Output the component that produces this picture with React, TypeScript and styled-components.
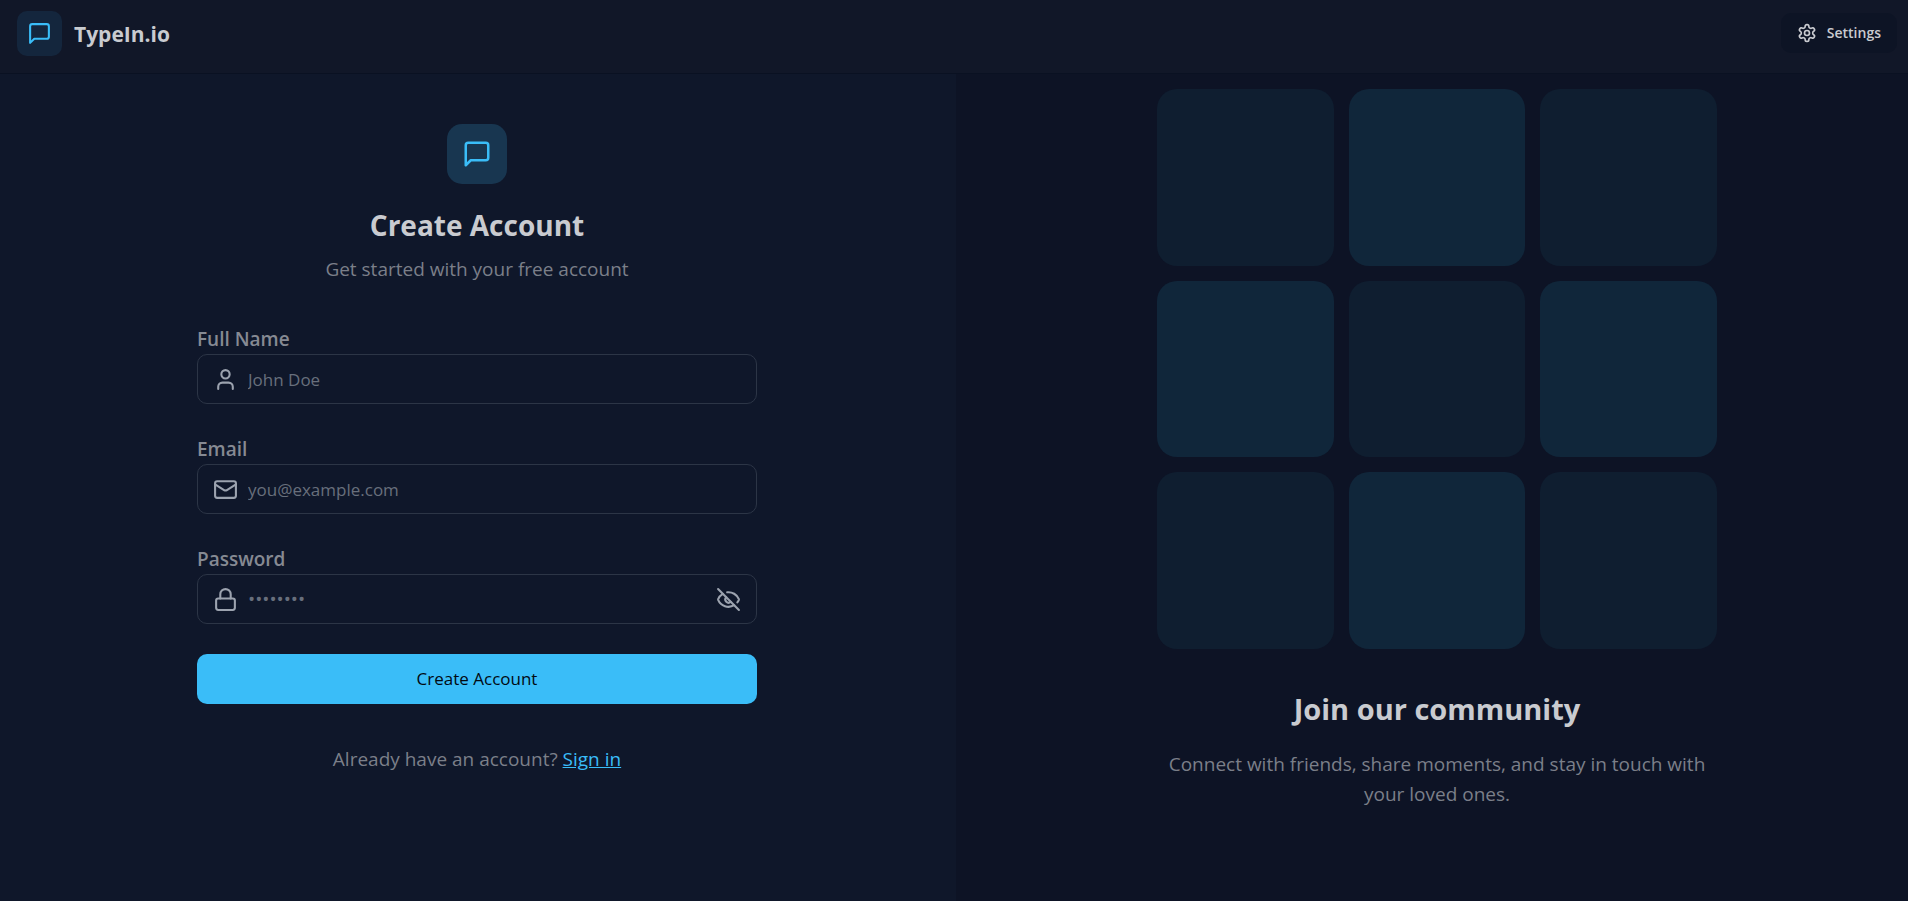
import React from "react";
import styled, { createGlobalStyle } from "styled-components";
import { User, Mail, Lock, EyeOff } from "lucide-react";

const GlobalStyle = createGlobalStyle`
  *, *::before, *::after { box-sizing: border-box; }
  body {
    margin: 0;
    background: #0f172a;
    color: #c9cbd0;
    font-family: "Segoe UI", "Open Sans", "Noto Sans", sans-serif;
    font-size: 19px;
    line-height: 30px;
  }
  h1, h2, p { margin: 0; }
`;

const Page = styled.div`
  min-height: 100vh;
  display: flex;
  flex-direction: column;
`;

const Header = styled.header`
  display: flex;
  align-items: flex-start;
  justify-content: space-between;
  height: 74px;
  padding: 11px 11px 0 17px;
  background: #111728;
  border-bottom: 1px solid #0a1122;
`;

const Brand = styled.a`
  display: flex;
  align-items: center;
  gap: 12px;
  color: inherit;
  text-decoration: none;
`;

const BrandName = styled.span`
  font-size: 21px;
  font-weight: 700;
`;

const IconTile = styled.span<{ $large?: boolean }>`
  display: flex;
  align-items: center;
  justify-content: center;
  width: ${(p) => (p.$large ? 60 : 45)}px;
  height: ${(p) => (p.$large ? 60 : 45)}px;
  border-radius: ${(p) => (p.$large ? 15 : 10)}px;
  background: ${(p) => (p.$large ? "#183650" : "#14263d")};
  color: #3abdf8;
`;

const LineIcon = styled.svg.attrs({ viewBox: "0 0 24 24", "aria-hidden": true })`
  fill: none;
  stroke: currentColor;
  stroke-width: 2;
  stroke-linecap: round;
  stroke-linejoin: round;
`;

const SettingsButton = styled.button`
  display: flex;
  align-items: center;
  gap: 10px;
  height: 40px;
  margin-top: 2px;
  padding: 0 16px;
  border: 0;
  border-radius: 10px;
  background: #0d1425;
  color: #c9cbd0;
  font: inherit;
  font-size: 14px;
  font-weight: 600;
`;

const Main = styled.main`
  flex: 1;
  display: grid;
  grid-template-columns: 1fr 1fr;
  column-gap: 4px;
`;

const FormSide = styled.section`
  display: flex;
  flex-direction: column;
  align-items: center;
  padding: 50px 0 0 2px;
`;

const Column = styled.div`
  width: 100%;
  max-width: 560px;
`;

const Intro = styled.div`
  display: flex;
  flex-direction: column;
  align-items: center;
  margin-bottom: 40px;
`;

const Title = styled.h1`
  margin: 21px 0 9px;
  font-size: 28px;
  line-height: 40px;
  font-weight: 700;
`;

const Muted = styled.p`
  color: #7b7f89;
  text-align: center;
`;

const Form = styled.form`
  display: flex;
  flex-direction: column;
  gap: 30px;
  margin-bottom: 40px;
`;

const Label = styled.label`
  display: block;
  color: #868a93;
  font-weight: 600;
`;

const InputBox = styled.div`
  display: flex;
  align-items: center;
  height: 50px;
  padding: 0 15px;
  border: 1px solid #2c3546;
  border-radius: 10px;
  color: #9ca3af;
`;

const Input = styled.input`
  flex: 1;
  min-width: 0;
  height: 100%;
  margin: 0 10px;
  padding: 0;
  border: 0;
  outline: 0;
  background: transparent;
  color: #c9cbd0;
  font: inherit;
  font-size: ${(p) => (p.type === "password" ? 19 : 17)}px;
  &::placeholder { color: #686f7c; opacity: 1; }
`;

const IconButton = styled.button`
  display: flex;
  padding: 0;
  border: 0;
  background: none;
  color: inherit;
`;

const Submit = styled.button`
  height: 50px;
  border: 0;
  border-radius: 10px;
  background: #3abdf8;
  color: #020a12;
  font: inherit;
  font-size: 17px;
  font-weight: 500;
`;

const TextLink = styled.a`
  color: #3abdf8;
  text-decoration: underline;
`;

const CommunitySide = styled.section`
  display: flex;
  flex-direction: column;
  align-items: center;
  padding: 15px 0 0 10px;
  background: #0d1325;
`;

const Pattern = styled.div`
  display: grid;
  grid-template-columns: repeat(3, 1fr);
  gap: 15px;
  margin-bottom: 40px;
`;

const Tile = styled.div<{ $bright: boolean }>`
  aspect-ratio: 1;
  border-radius: 20px;
  background: ${(p) => (p.$bright ? "#10263a" : "#0f1e30")};
`;

const Subtitle = styled.h2`
  margin-bottom: 20px;
  font-size: 29px;
  line-height: 40px;
  font-weight: 700;
  text-align: center;
`;

const ChatIcon = ({ size }: { size: number }) => (
  <LineIcon width={size} height={size}>
    <path d="M21 15a2 2 0 0 1-2 2H7l-4 4V5a2 2 0 0 1 2-2h14a2 2 0 0 1 2 2z" />
  </LineIcon>
);

const GearIcon = ({ size }: { size: number }) => (
  <LineIcon width={size} height={size}>
    <path d="M12.22 2h-.44a2 2 0 0 0-2 2v.18a2 2 0 0 1-1 1.73l-.43.25a2 2 0 0 1-2 0l-.15-.08a2 2 0 0 0-2.73.73l-.22.38a2 2 0 0 0 .73 2.73l.15.1a2 2 0 0 1 1 1.72v.51a2 2 0 0 1-1 1.74l-.15.09a2 2 0 0 0-.73 2.73l.22.38a2 2 0 0 0 2.73.73l.15-.08a2 2 0 0 1 2 0l.43.25a2 2 0 0 1 1 1.73V20a2 2 0 0 0 2 2h.44a2 2 0 0 0 2-2v-.18a2 2 0 0 1 1-1.73l.43-.25a2 2 0 0 1 2 0l.15.08a2 2 0 0 0 2.73-.73l.22-.39a2 2 0 0 0-.73-2.73l-.15-.08a2 2 0 0 1-1-1.74v-.5a2 2 0 0 1 1-1.74l.15-.09a2 2 0 0 0 .73-2.73l-.22-.38a2 2 0 0 0-2.73-.73l-.15.08a2 2 0 0 1-2 0l-.43-.25a2 2 0 0 1-1-1.73V4a2 2 0 0 0-2-2z" />
    <circle cx="12" cy="12" r="3" />
  </LineIcon>
);

const fields = [
  { id: "name", label: "Full Name", type: "text", placeholder: "John Doe", Icon: User },
  { id: "email", label: "Email", type: "email", placeholder: "you@example.com", Icon: Mail },
  { id: "password", label: "Password", type: "password", placeholder: "••••••••", Icon: Lock },
];

export default function App() {
  return (
    <Page>
      <GlobalStyle />
      <Header>
        <Brand href="#">
          <IconTile><ChatIcon size={25} /></IconTile>
          <BrandName>TypeIn.io</BrandName>
        </Brand>
        <SettingsButton type="button">
          <GearIcon size={20} />
          Settings
        </SettingsButton>
      </Header>
      <Main>
        <FormSide>
          <Column>
            <Intro>
              <IconTile $large><ChatIcon size={30} /></IconTile>
              <Title>Create Account</Title>
              <Muted>Get started with your free account</Muted>
            </Intro>
            <Form>
              {fields.map(({ id, label, type, placeholder, Icon }) => (
                <div key={id}>
                  <Label htmlFor={id}>{label}</Label>
                  <InputBox>
                    <Icon size={25} />
                    <Input id={id} type={type} placeholder={placeholder} />
                    {type === "password" && (
                      <IconButton type="button" aria-label="Show password">
                        <EyeOff size={25} />
                      </IconButton>
                    )}
                  </InputBox>
                </div>
              ))}
              <Submit type="submit">Create Account</Submit>
            </Form>
            <Muted>
              Already have an account? <TextLink href="#">Sign in</TextLink>
            </Muted>
          </Column>
        </FormSide>
        <CommunitySide>
          <Column>
            <Pattern>
              {Array.from({ length: 9 }, (_, i) => (
                <Tile key={i} $bright={i % 2 === 1} />
              ))}
            </Pattern>
            <Subtitle>Join our community</Subtitle>
            <Muted>
              Connect with friends, share moments, and stay in touch with your loved ones.
            </Muted>
          </Column>
        </CommunitySide>
      </Main>
    </Page>
  );
}
